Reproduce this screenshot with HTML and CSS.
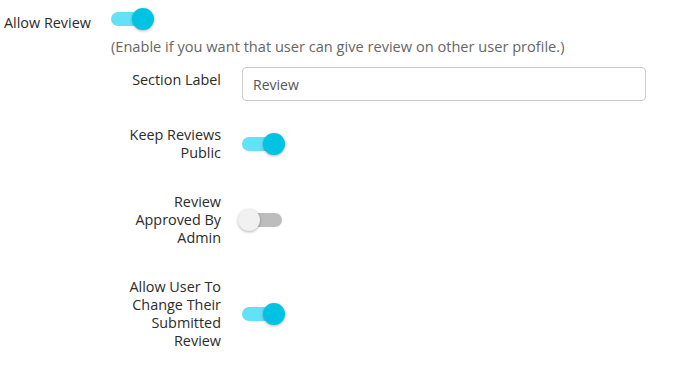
FILE: index.html
```html
<!DOCTYPE html>
<html lang="en">
<head>
    <meta charset="UTF-8">
    <meta name="viewport" content="width=device-width, initial-scale=1.0">
    <title>Review Settings</title>
    <link rel="stylesheet" href="styles.css">
</head>
<body>

    <div class="field main-field">
        <label class="main-label">Allow Review</label>
        <div class="main-control">
            <span class="toggle on"><span class="knob"></span></span>
            <p class="hint">(Enable if you want that user can give review on other user profile.)</p>

            <div class="sub-fields">
                <div class="row row-input">
                    <label class="row-label" for="sectionLabel">Section Label</label>
                    <div class="row-control">
                        <input type="text" id="sectionLabel" value="Review">
                    </div>
                </div>

                <div class="row">
                    <label class="row-label">Keep Reviews Public</label>
                    <div class="row-control">
                        <span class="toggle on"><span class="knob"></span></span>
                    </div>
                </div>

                <div class="row">
                    <label class="row-label">Review Approved By Admin</label>
                    <div class="row-control">
                        <span class="toggle"><span class="knob"></span></span>
                    </div>
                </div>

                <div class="row">
                    <label class="row-label">Allow User To Change Their Submitted Review</label>
                    <div class="row-control">
                        <span class="toggle on"><span class="knob"></span></span>
                    </div>
                </div>
            </div>
        </div>
    </div>

</body>
</html>
```

FILE: styles.css
```css
body {
    font-family: "Open Sans", Arial, sans-serif;
    font-size: 14.4px;
    line-height: 18px;
    color: #2b2b2b;
    margin: 0;
    padding: 0 0 0 4px;
    background: #fff;
}
.main-field {
    display: flex;
}
.main-label {
    width: 107px;
    padding-top: 14px;
}
.main-control {
    padding-top: 8px;
}
.hint {
    margin: 7px 0 0;
    font-size: 14.6px;
    color: #666;
}
.sub-fields {
    margin-top: 12px;
}
.row {
    display: flex;
    align-items: center;
    gap: 21px;
    margin-bottom: 31px;
}
.row-input {
    align-items: flex-start;
    margin-bottom: 25px;
}
.row-input .row-label {
    padding-top: 4px;
}
.row-label {
    width: 110px;
    text-align: right;
}
input {
    width: 404px;
    height: 34px;
    box-sizing: border-box;
    border: 1px solid #ccc;
    border-radius: 4px;
    padding: 0 10px;
    font-family: inherit;
    font-size: 14px;
    color: #555;
}
.toggle {
    position: relative;
    display: block;
    width: 40px;
    height: 22px;
}
.toggle::before {
    content: "";
    position: absolute;
    left: 0;
    right: 0;
    top: 4px;
    height: 14px;
    border-radius: 7px;
    background: #bdbdbd;
}
.toggle .knob {
    position: absolute;
    top: 0;
    left: -4px;
    width: 22px;
    height: 22px;
    border-radius: 50%;
    background: #f1f1f1;
    box-shadow: 0 1px 3px rgba(0, 0, 0, 0.3);
}
.toggle.on::before {
    background: #62e1f7;
}
.toggle.on .knob {
    left: 21px;
    background: #00c3e3;
}
```
